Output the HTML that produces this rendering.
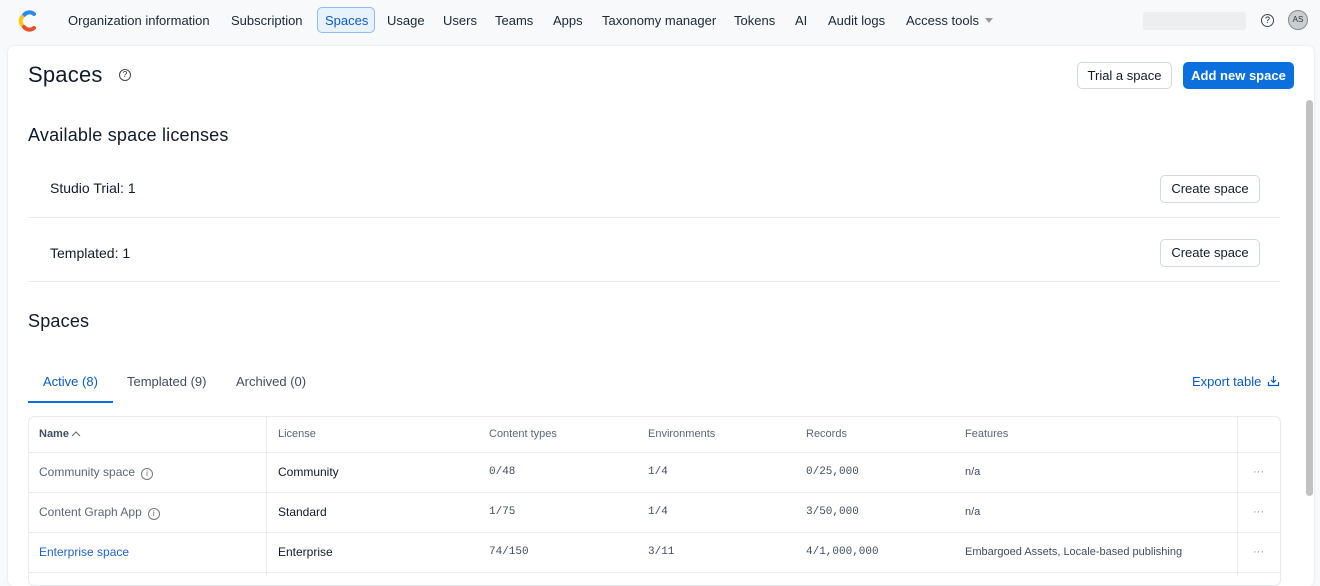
<!DOCTYPE html>
<html><head><meta charset="utf-8"><style>
*{margin:0;padding:0;box-sizing:border-box}
body{width:1320px;height:574px;overflow:hidden;background:#f7f9fa;font-family:"Liberation Sans",sans-serif;color:#111b2b;position:relative}
.a{position:absolute;white-space:nowrap}
.nav{font-size:13px;top:13px;color:#1b273a}
.card{position:absolute;left:8px;top:46px;width:1306px;height:540px;background:#fff;border-radius:6px;box-shadow:0 0 2px rgba(0,0,0,.12)}
.btn{position:absolute;border:1px solid #cfd9e0;border-radius:5px;background:#fff;font-size:13px;text-align:center;color:#111b2b}
.hr{position:absolute;height:1px;background:#e7ebee}
.mono{font-family:"Liberation Mono",monospace;font-size:11px;color:#414d63}
.th{font-size:11px;color:#5a6679;top:428px}
.info{display:inline-block;width:12px;height:12px;border:1px solid #777;border-radius:50%;font-size:8px;text-align:center;line-height:10px;margin-left:6px;vertical-align:0px;color:#555}
.dots{position:absolute;left:1253px;font-size:11px;color:#888}
</style></head><body>
<svg class="a" style="left:16px;top:9px" width="22" height="24" viewBox="0 0 22 24">
<path d="M8 6 A7 7 0 0 1 18 5" stroke="#2b8be6" stroke-width="4" fill="none" stroke-linecap="round"/>
<path d="M6 8 A7 7 0 0 0 6 16" stroke="#f7c61d" stroke-width="4" fill="none" stroke-linecap="round"/>
<path d="M8 18 A7 7 0 0 0 18 19" stroke="#e4512a" stroke-width="4" fill="none" stroke-linecap="round"/>
</svg>
<div class="a nav" style="left:68px">Organization information</div>
<div class="a nav" style="left:231px">Subscription</div>
<div class="a" style="left:317px;top:7px;width:58px;height:26px;background:#e8f2fd;border:1px solid #8dbcef;border-radius:5px"></div>
<div class="a nav" style="left:325px;color:#0b5bc4">Spaces</div>
<div class="a nav" style="left:387px">Usage</div>
<div class="a nav" style="left:443px">Users</div>
<div class="a nav" style="left:495px">Teams</div>
<div class="a nav" style="left:553px">Apps</div>
<div class="a nav" style="left:602px">Taxonomy manager</div>
<div class="a nav" style="left:734px">Tokens</div>
<div class="a nav" style="left:795px">AI</div>
<div class="a nav" style="left:828px">Audit logs</div>
<div class="a nav" style="left:906px">Access tools</div>
<div class="a" style="left:985px;top:18px;border:4px solid transparent;border-top:5px solid #999"></div>
<div class="a" style="left:1143px;top:12px;width:103px;height:18px;background:#eceef0;border-radius:3px"></div>
<div class="a" style="left:1261px;top:14px;width:13px;height:13px;border:1px solid #444;border-radius:50%;font-size:9px;text-align:center;line-height:11px">?</div>
<div class="a" style="left:1288px;top:10px;width:20px;height:20px;border-radius:50%;background:#c9ced3;border:1px solid #888;font-size:8px;text-align:center;line-height:18px;color:#333">AS</div>
<div class="card"></div>
<div class="a" style="left:1306px;top:100px;width:7px;height:396px;background:#c1c1c1;border-radius:4px"></div>
<div class="a" style="left:28px;top:62px;font-size:22px;font-weight:500;letter-spacing:0.2px">Spaces</div>
<div class="a" style="left:119px;top:69px;width:12px;height:12px;border:1px solid #444;border-radius:50%;font-size:8px;text-align:center;line-height:10px">?</div>
<div class="btn" style="left:1077px;top:62px;width:95px;height:27px;line-height:25px">Trial a space</div>
<div class="btn" style="left:1183px;top:62px;width:111px;height:27px;line-height:25px;background:#0b6fde;border-color:#0b6fde;color:#fff;font-weight:bold">Add new space</div>
<div class="a" style="left:28px;top:125px;font-size:18px;font-weight:500;letter-spacing:0.2px">Available space licenses</div>
<div class="a" style="left:50px;top:180px;font-size:14px;font-weight:500">Studio Trial: 1</div>
<div class="btn" style="left:1160px;top:175px;width:100px;height:28px;line-height:26px">Create space</div>
<div class="hr" style="left:28px;top:217px;width:1252px"></div>
<div class="a" style="left:50px;top:245px;font-size:14px;font-weight:500">Templated: 1</div>
<div class="btn" style="left:1160px;top:239px;width:100px;height:28px;line-height:26px">Create space</div>
<div class="hr" style="left:28px;top:281px;width:1252px"></div>
<div class="a" style="left:28px;top:311px;font-size:18px;font-weight:500;letter-spacing:0.2px">Spaces</div>
<div class="a" style="left:43px;top:374px;font-size:13px;color:#0b5bc4">Active (8)</div>
<div class="a" style="left:127px;top:374px;font-size:13px;color:#414d63">Templated (9)</div>
<div class="a" style="left:236px;top:374px;font-size:13px;color:#414d63">Archived (0)</div>
<div class="hr" style="left:28px;top:401px;width:85px;height:2px;background:#0b6fde"></div>
<div class="a" style="left:1192px;top:374px;font-size:13px;color:#0b5bc4">Export table</div>
<svg class="a" style="left:1267px;top:375px" width="13" height="12" viewBox="0 0 13 12"><path d="M6.5 1v6M4 5l2.5 2.5L9 5M1.5 7v3.5h10V7" stroke="#0b5bc4" stroke-width="1.2" fill="none"/></svg>
<div class="a" style="left:28px;top:416px;width:1253px;height:170px;border:1px solid #e7ebee;border-radius:6px"></div>
<div class="a" style="left:266px;top:416px;width:1px;height:160px;background:#e7ebee"></div>
<div class="a" style="left:1237px;top:416px;width:1px;height:160px;background:#e7ebee"></div>
<div class="hr" style="left:28px;top:452px;width:1253px"></div>
<div class="hr" style="left:28px;top:492px;width:1253px"></div>
<div class="hr" style="left:28px;top:532px;width:1253px"></div>
<div class="hr" style="left:28px;top:572px;width:1253px"></div>
<div class="a th" style="left:39px;font-weight:bold;color:#414d63">Name</div>
<svg class="a" style="left:71px;top:431px" width="10" height="6" viewBox="0 0 10 6"><path d="M1 5l4-4 4 4" stroke="#666" fill="none"/></svg>
<div class="a th" style="left:278px">License</div>
<div class="a th" style="left:489px">Content types</div>
<div class="a th" style="left:648px">Environments</div>
<div class="a th" style="left:806px">Records</div>
<div class="a th" style="left:965px">Features</div>
<div class="a" style="left:39px;top:465px;font-size:12px;color:#5a6679">Community space<span class="info">i</span></div>
<div class="a" style="left:278px;top:465px;font-size:12px;font-weight:500">Community</div>
<div class="a mono" style="left:489px;top:466px">0/48</div>
<div class="a mono" style="left:648px;top:466px">1/4</div>
<div class="a mono" style="left:806px;top:466px">0/25,000</div>
<div class="a" style="left:965px;top:466px;font-size:11px;color:#414d63">n/a</div>
<div class="dots" style="top:466px">···</div>
<div class="a" style="left:39px;top:505px;font-size:12px;color:#5a6679">Content Graph App<span class="info">i</span></div>
<div class="a" style="left:278px;top:505px;font-size:12px;font-weight:500">Standard</div>
<div class="a mono" style="left:489px;top:506px">1/75</div>
<div class="a mono" style="left:648px;top:506px">1/4</div>
<div class="a mono" style="left:806px;top:506px">3/50,000</div>
<div class="a" style="left:965px;top:506px;font-size:11px;color:#414d63">n/a</div>
<div class="dots" style="top:506px">···</div>
<div class="a" style="left:39px;top:545px;font-size:12px;color:#1e64c8">Enterprise space</div>
<div class="a" style="left:278px;top:545px;font-size:12px;font-weight:500">Enterprise</div>
<div class="a mono" style="left:489px;top:546px">74/150</div>
<div class="a mono" style="left:648px;top:546px">3/11</div>
<div class="a mono" style="left:806px;top:546px">4/1,000,000</div>
<div class="a" style="left:965px;top:546px;font-size:11px;color:#414d63">Embargoed Assets, Locale-based publishing</div>
<div class="dots" style="top:546px">···</div>
</body></html>
